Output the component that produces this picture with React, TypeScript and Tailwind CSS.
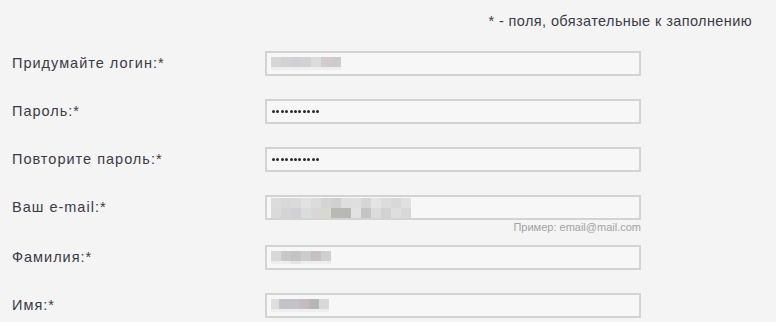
import React from 'react';

type Blur = { w: number; c: string; c2?: string };

// pixelated (blurred) values as seen in the screenshot
const Pixels: React.FC<{ cells: Blur[] }> = ({ cells }) => (
    <div className="flex flex-col">
        <div className="flex">
            {cells.map((b, i) => (
                <div key={i} className="h-[10px]" style={{ width: b.w, background: b.c }} />
            ))}
        </div>
        <div className="flex">
            {cells.map((b, i) => (
                <div key={i} className="h-[3px]" style={{ width: b.w, background: b.c2 ?? '#eeeeee' }} />
            ))}
        </div>
    </div>
);

const Dots = () => (
    <div className="flex gap-[1.4px] items-center pl-[1px]">
        {Array.from({ length: 11 }).map((_, i) => (
            <div key={i} className="w-[3px] h-[3px] rounded-full bg-[#2a2630]" />
        ))}
    </div>
);

const Field: React.FC<{ children?: React.ReactNode }> = ({ children }) => (
    <div className="w-[376px] h-[25px] border-2 border-[#d3d3d3] bg-[#f7f7f7] flex items-center pl-[4px]">
        {children}
    </div>
);

const Row: React.FC<{ label: string; children?: React.ReactNode; hint?: string }> = ({ label, children, hint }) => (
    <div className="flex items-start">
        <div className="w-[253px] h-[25px] flex items-center text-[14.5px] tracking-[1px] text-[#3c3a48]">{label}</div>
        <div className="flex flex-col">
            <Field>{children}</Field>
            {hint && (
                <div className="text-right text-[11px] leading-[12px] text-[#a3a3a3] -mb-[11px] mt-[1px]">{hint}</div>
            )}
        </div>
    </div>
);

export default function App() {
    return (
        <div className="w-full h-[322px] bg-[#f4f4f4] overflow-hidden px-3" style={{ fontFamily: '"Liberation Sans", Arial, sans-serif' }}>
            <div className="h-[51px] flex justify-end pt-[13px] pr-[12px]">
                <span className="text-[14.5px] leading-[16px] tracking-[0.4px] text-[#3c3a48]">* - поля, обязательные к заполнению</span>
            </div>
            <div className="flex flex-col gap-[23px]">
                <Row label="Придумайте логин:*">
                    <Pixels cells={[
                        { w: 10, c: '#d6d6d6' }, { w: 10, c: '#d2d2d0' }, { w: 10, c: '#d0ced6' },
                        { w: 10, c: '#d4d0d6' }, { w: 10, c: '#dcdcda' }, { w: 10, c: '#d2cacf' }, { w: 10, c: '#cdcccd' },
                    ]} />
                </Row>
                <Row label="Пароль:*"><Dots /></Row>
                <Row label="Повторите пароль:*"><Dots /></Row>
                <Row label="Ваш e-mail:*" hint="Пример: email@mail.com">
                    <div className="flex flex-col">
                        <div className="flex">
                            {['#dcdcdc', '#d8d8d8', '#dadada', '#e2e2e0', '#dcdcdc', '#d6d2d6', '#d0d0d0', '#dedede', '#e0dfe0', '#d6d6d6', '#e4e4e4', '#dddddd', '#d8d8d8', '#e0e0e2'].map((c, i) => (
                                <div key={i} className="w-[10px] h-[10px]" style={{ background: c }} />
                            ))}
                        </div>
                        <div className="flex">
                            {['#dadada', '#d4d4d4', '#d2d0d6', '#dcdcd8', '#dad6d6', '#d6d8d2', '#b8b8b4', '#b8b8b4', '#e2e2e2', '#c4c4c4', '#dcdcdc', '#d2d2d2', '#dedede', '#d6d8dc'].map((c, i) => (
                                <div key={i} className="w-[10px] h-[10px]" style={{ background: c }} />
                            ))}
                        </div>
                    </div>
                </Row>
                <Row label="Фамилия:*">
                    <Pixels cells={[
                        { w: 10, c: '#d8d8d8' }, { w: 10, c: '#c8c8c8' }, { w: 10, c: '#c4c4c4', c2: '#e4e4e4' },
                        { w: 10, c: '#cccccc' }, { w: 10, c: '#c6c0c0' }, { w: 10, c: '#cfcfcf' },
                    ]} />
                </Row>
                <Row label="Имя:*">
                    <Pixels cells={[
                        { w: 8, c: '#dedede' }, { w: 10, c: '#c2c2c8' }, { w: 10, c: '#c4c4c8' },
                        { w: 10, c: '#c6bcc0' }, { w: 10, c: '#b6b6ba' }, { w: 10, c: '#d8d8d8' },
                    ]} />
                </Row>
            </div>
        </div>
    );
}
